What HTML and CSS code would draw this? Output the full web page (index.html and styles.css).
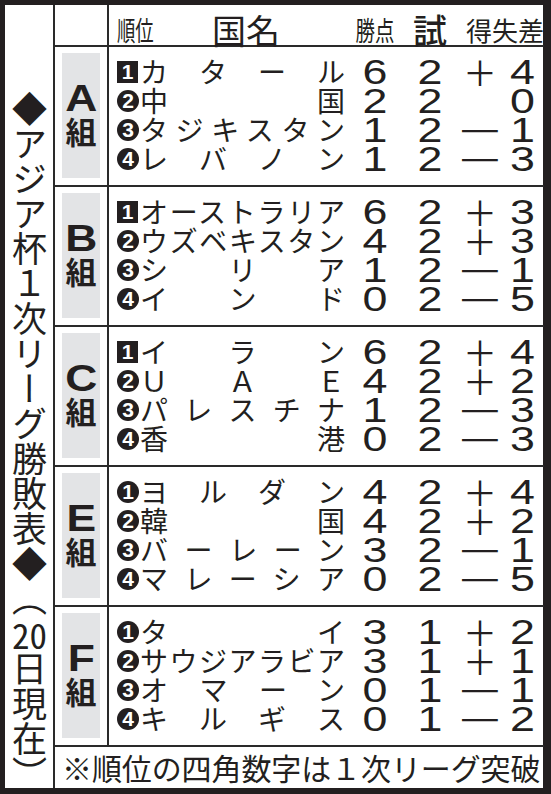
FILE: index.html
```html
<!DOCTYPE html>
<html lang="ja">
<head>
<meta charset="utf-8">
<link rel="stylesheet" href="styles.css">
</head>
<body>
<div class="frame">
  <div class="title">◆アジア杯１次リーグ勝敗表◆（<span class="tcy">20</span>日現在）</div>
  <div class="table">
    <div class="hlabel"></div>
    <div class="hmain">
      <span class="h-rank">順位</span>
      <span class="h-name">国名</span>
      <span class="h-pts">勝点</span>
      <span class="h-gp">試</span>
      <span class="h-diff">得失差</span>
    </div>

    <div class="glabel"><div class="gbox"><span class="gl">A</span><span class="gk">組</span></div></div>
    <div class="rows">
      <div class="row"><span class="rk sq">1</span><span class="nm">カタール</span><span class="num">6</span><span class="num">2</span><span class="sg">＋</span><span class="num">4</span></div>
      <div class="row"><span class="rk ci">2</span><span class="nm">中国</span><span class="num">2</span><span class="num">2</span><span class="sg"></span><span class="num">0</span></div>
      <div class="row"><span class="rk ci">3</span><span class="nm">タジキスタン</span><span class="num">1</span><span class="num">2</span><span class="sg"><span class="mi">－</span></span><span class="num">1</span></div>
      <div class="row"><span class="rk ci">4</span><span class="nm">レバノン</span><span class="num">1</span><span class="num">2</span><span class="sg"><span class="mi">－</span></span><span class="num">3</span></div>
    </div>

    <div class="glabel"><div class="gbox"><span class="gl">B</span><span class="gk">組</span></div></div>
    <div class="rows">
      <div class="row"><span class="rk sq">1</span><span class="nm">オーストラリア</span><span class="num">6</span><span class="num">2</span><span class="sg">＋</span><span class="num">3</span></div>
      <div class="row"><span class="rk ci">2</span><span class="nm">ウズベキスタン</span><span class="num">4</span><span class="num">2</span><span class="sg">＋</span><span class="num">3</span></div>
      <div class="row"><span class="rk ci">3</span><span class="nm">シリア</span><span class="num">1</span><span class="num">2</span><span class="sg"><span class="mi">－</span></span><span class="num">1</span></div>
      <div class="row"><span class="rk ci">4</span><span class="nm">インド</span><span class="num">0</span><span class="num">2</span><span class="sg"><span class="mi">－</span></span><span class="num">5</span></div>
    </div>

    <div class="glabel"><div class="gbox"><span class="gl">C</span><span class="gk">組</span></div></div>
    <div class="rows">
      <div class="row"><span class="rk sq">1</span><span class="nm">イラン</span><span class="num">6</span><span class="num">2</span><span class="sg">＋</span><span class="num">4</span></div>
      <div class="row"><span class="rk ci">2</span><span class="nm">ＵＡＥ</span><span class="num">4</span><span class="num">2</span><span class="sg">＋</span><span class="num">2</span></div>
      <div class="row"><span class="rk ci">3</span><span class="nm">パレスチナ</span><span class="num">1</span><span class="num">2</span><span class="sg"><span class="mi">－</span></span><span class="num">3</span></div>
      <div class="row"><span class="rk ci">4</span><span class="nm">香港</span><span class="num">0</span><span class="num">2</span><span class="sg"><span class="mi">－</span></span><span class="num">3</span></div>
    </div>

    <div class="glabel"><div class="gbox"><span class="gl">E</span><span class="gk">組</span></div></div>
    <div class="rows">
      <div class="row"><span class="rk ci">1</span><span class="nm">ヨルダン</span><span class="num">4</span><span class="num">2</span><span class="sg">＋</span><span class="num">4</span></div>
      <div class="row"><span class="rk ci">2</span><span class="nm">韓国</span><span class="num">4</span><span class="num">2</span><span class="sg">＋</span><span class="num">2</span></div>
      <div class="row"><span class="rk ci">3</span><span class="nm">バーレーン</span><span class="num">3</span><span class="num">2</span><span class="sg"><span class="mi">－</span></span><span class="num">1</span></div>
      <div class="row"><span class="rk ci">4</span><span class="nm">マレーシア</span><span class="num">0</span><span class="num">2</span><span class="sg"><span class="mi">－</span></span><span class="num">5</span></div>
    </div>

    <div class="glabel"><div class="gbox"><span class="gl">F</span><span class="gk">組</span></div></div>
    <div class="rows">
      <div class="row"><span class="rk ci">1</span><span class="nm">タイ</span><span class="num">3</span><span class="num">1</span><span class="sg">＋</span><span class="num">2</span></div>
      <div class="row"><span class="rk ci">2</span><span class="nm">サウジアラビア</span><span class="num">3</span><span class="num">1</span><span class="sg">＋</span><span class="num">1</span></div>
      <div class="row"><span class="rk ci">3</span><span class="nm">オマーン</span><span class="num">0</span><span class="num">1</span><span class="sg"><span class="mi">－</span></span><span class="num">1</span></div>
      <div class="row"><span class="rk ci">4</span><span class="nm">キルギス</span><span class="num">0</span><span class="num">1</span><span class="sg"><span class="mi">－</span></span><span class="num">2</span></div>
    </div>

    <div class="foot">※順位の四角数字は１次リーグ突破</div>
  </div>
</div>
</body>
</html>
```

FILE: styles.css
```css
* { box-sizing: border-box; margin: 0; padding: 0; }
html, body { background: #fff; }
body {
  margin: 0;
  font-family: "Noto Sans CJK JP", "Noto Sans", sans-serif;
  color: #231f20;
}
.frame {
  width: 551px;
  height: 794px;
  border-style: solid;
  border-color: #231f20;
  border-width: 5px 8px 6px 5px;
  display: flex;
}
.title {
  width: 50px;
  flex: none;
  border-right: 2px solid #2a2a2a;
  writing-mode: vertical-rl;
  font-size: 35px;
  line-height: 48px;
  padding-top: 86px;
  white-space: nowrap;
}
.tcy { text-combine-upright: all; }

.table {
  flex: 1;
  display: grid;
  grid-template-columns: 54px 1fr;
  grid-template-rows: 42px repeat(5, 140px) 1fr;
}
.hlabel, .glabel {
  border-right: 2px solid #2a2a2a;
  border-bottom: 2px solid #2a2a2a;
}
.hmain, .rows { border-bottom: 2px solid #2a2a2a; }

.hmain {
  display: grid;
  grid-template-columns: 91px 137px 60px 50px 1fr;
  align-items: center;
  padding-left: 8px;
  padding-bottom: 2px;
  white-space: nowrap;
}
.h-rank {
  font-size: 27px;
  display: inline-block;
  transform: scaleX(0.68);
  transform-origin: left center;
}
.h-name { font-size: 34px; padding-left: 4px; line-height: 40px; }
.h-pts {
  font-size: 27px;
  text-align: center;
  display: inline-block;
  transform: scaleX(0.72);
}
.h-gp { font-size: 34px; font-weight: 500; text-align: center; }
.h-diff { font-size: 26px; text-align: right; }

.glabel { padding: 6px 7px 7px 7px; }
.gbox {
  height: 100%;
  background: #e3e4e6;
  display: flex;
  flex-direction: column;
  align-items: center;
  justify-content: center;
}
.gl {
  font-family: "Liberation Sans", sans-serif;
  font-weight: 700;
  font-size: 37px;
  line-height: 30px;
  display: inline-block;
  transform: scaleX(1.2);
}
.gk { font-size: 31px; font-weight: 700; line-height: 34px; }

.rows { padding: 10px 0 8px 8px; }
.row {
  display: flex;
  align-items: center;
  height: 29px;
}
.rk {
  flex: 0 0 22px;
  width: 22px;
  height: 22px;
  margin-right: 1px;
  background: #231f20;
  color: #fff;
  font-family: "Liberation Sans", sans-serif;
  font-weight: 700;
  font-size: 21px;
  line-height: 22px;
  text-align: center;
}
.sq { flex-basis: 21px; width: 21px; margin-right: 2px; }
.ci { border-radius: 50%; }
.nm {
  flex: 0 0 205px;
  font-size: 28px;
  line-height: 29px;
  text-align: justify;
  text-align-last: justify;
  white-space: nowrap;
}
.num {
  flex: 0 0 60px;
  font-family: "Liberation Sans", sans-serif;
  font-size: 35px;
  line-height: 29px;
  text-align: center;
  transform: scaleX(1.28);
}
.num + .num { flex-basis: 50px; }
.sg {
  flex: 0 0 46px;
  font-size: 34px;
  line-height: 29px;
  text-align: center;
  padding-left: 4px;
}
.sg + .num { flex-basis: 43px; }
.mi {
  display: inline-block;
  transform: scaleX(1.45);
}

.foot {
  grid-column: 1 / 3;
  font-size: 30px;
  line-height: 40px;
  padding-left: 7px;
  white-space: nowrap;
  letter-spacing: -0.1px;
}
```
